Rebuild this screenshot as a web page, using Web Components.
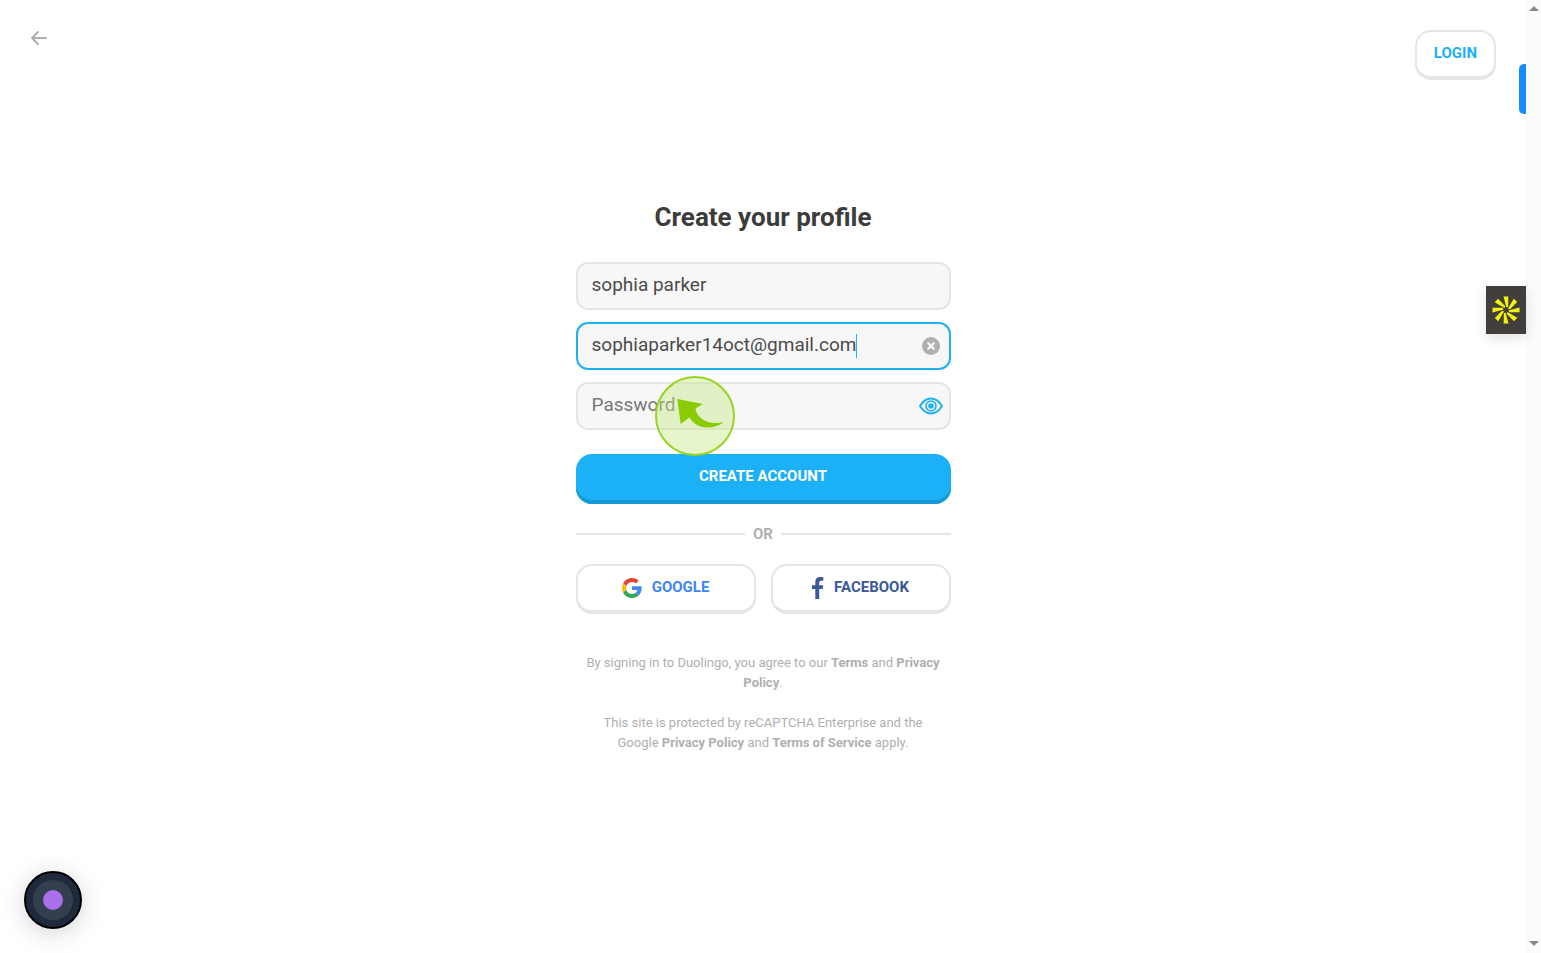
<!DOCTYPE html>
<html lang="en">
<head>
<meta charset="utf-8">
<meta name="viewport" content="width=device-width, initial-scale=1">
<title>Create your profile</title>
<style>
  :root {
    --clr-accent: #1cb0f6;
    --clr-accent-dark: #1899d6;
    --clr-text: #3c3c3c;
    --clr-muted: #afafaf;
    --clr-line: #e5e5e5;
    --clr-field: #f7f7f7;
  }

  body {
    margin: 0;
    background: #fff;
    color: var(--clr-text);
    font-family: Roboto, "Liberation Sans", sans-serif;
  }
</style>
</head>
<body>

<sp-page>
  <sp-header slot="header"></sp-header>
  <sp-signup slot="main"></sp-signup>
  <sp-recorder slot="overlay"></sp-recorder>
  <sp-side-tabs slot="overlay"></sp-side-tabs>
  <sp-scrollbar slot="scrollbar"></sp-scrollbar>
</sp-page>

<script>
function define(name, html, setup) {
  const template = document.createElement('template');
  template.innerHTML = html;

  customElements.define(name, class extends HTMLElement {
    constructor() {
      super();
      this.attachShadow({ mode: 'open' });
      this.shadowRoot.appendChild(template.content.cloneNode(true));
    }

    connectedCallback() {
      if (setup) setup(this, this.shadowRoot);
    }
  });
}

define('sp-page', /*html*/`
  <style>
  :host {
    display: grid;
    grid-template-columns: 1fr 15px;
    min-height: 100vh;
  }

  .view {
    position: relative;
    display: grid;
  }

  header, main {
    grid-area: 1 / 1;
  }

  header {
    align-self: start;
  }

  main {
    place-self: center;
  }
  </style>

  <div class="view">
    <header><slot name="header"></slot></header>
    <main><slot name="main"></slot></main>
    <slot name="overlay"></slot>
  </div>
  <slot name="scrollbar"></slot>
`);

define('sp-header', /*html*/`
  <style>
  :host {
    display: flex;
    justify-content: space-between;
    align-items: flex-start;
    padding: 30px;
  }

  .back {
    display: flex;
    padding: 0;
    border: 0;
    background: none;
    cursor: pointer;
  }
  </style>

  <button class="back" type="button" aria-label="Back">
    <svg width="18" height="16" viewBox="0 0 18 16" fill="none" stroke="#afafaf" stroke-width="2" stroke-linecap="round" stroke-linejoin="round">
      <path d="M16 8H2M8 2L2 8l6 6"/>
    </svg>
  </button>
  <sp-button>LOGIN</sp-button>
`);

define('sp-button', /*html*/`
  <style>
  :host {
    display: block;
    --clr-label: var(--clr-accent);
  }

  :host([kind="google"]) {
    --clr-label: #4285f4;
  }

  :host([kind="facebook"]) {
    --clr-label: #3b5998;
  }

  button {
    display: flex;
    justify-content: center;
    align-items: center;
    gap: 10px;
    width: 100%;
    height: 50px;
    padding: 0 17px 2px;
    border: 2px solid var(--clr-line);
    border-bottom-width: 4px;
    border-radius: 16px;
    background: #fff;
    color: var(--clr-label);
    font: 700 15px/20px Roboto, "Liberation Sans", sans-serif;
    cursor: pointer;
  }

  :host([kind="primary"]) button {
    border: 0;
    padding: 0 16px 6px;
    background: var(--clr-accent);
    box-shadow: inset 0 -4px var(--clr-accent-dark);
    color: #fff;
  }

  ::slotted(svg) {
    flex: none;
    margin-top: 2px;
  }
  </style>

  <button type="button"><slot name="icon"></slot><slot></slot></button>
`);

define('sp-field', /*html*/`
  <style>
  :host {
    position: relative;
    display: block;
  }

  label {
    display: flex;
    align-items: center;
    box-sizing: border-box;
    height: 48px;
    padding: 0 6px 0 14px;
    border: 2px solid var(--clr-line);
    border-radius: 12px;
    background: var(--clr-field);
    cursor: text;
  }

  :host([active]) label {
    border-color: var(--clr-accent);
  }

  input {
    flex: 1;
    min-width: 0;
    height: 26px;
    margin-bottom: 2px;
    padding: 0;
    border: 0;
    outline: 0;
    background: none;
    color: #4b4b4b;
    font: 400 19px/26px Roboto, "Liberation Sans", sans-serif;
  }

  input::placeholder {
    color: #777;
  }

  :host([active]) input {
    flex: none;
    field-sizing: content;
  }

  .caret {
    display: none;
    width: 1px;
    height: 24px;
    background: var(--clr-accent);
  }

  :host([active]) .caret {
    display: block;
  }

  ::slotted(button) {
    display: flex;
    justify-content: center;
    width: 24px;
    margin-left: auto;
    padding: 0;
    border: 0;
    background: none;
    cursor: pointer;
  }
  </style>

  <label><input><span class="caret"></span><slot></slot></label>
  <slot name="pointer"></slot>
`, (host, root) => {
  const input = root.querySelector('input');
  input.type = host.getAttribute('type') || 'text';
  input.value = host.getAttribute('value') || '';
  input.placeholder = host.getAttribute('placeholder') || '';
  input.setAttribute('aria-label', host.getAttribute('label'));
});

define('sp-pointer', /*html*/`
  <style>
  :host {
    position: absolute;
    left: 79px;
    top: -6px;
    z-index: 1;
    pointer-events: none;
  }

  svg {
    display: block;
  }
  </style>

  <svg width="80" height="80" viewBox="0 0 80 80">
    <circle cx="40" cy="40" r="39" fill="#c4e880" fill-opacity=".42" stroke="#99d323" stroke-width="2"/>
    <path d="M22.3 23L47.8 28L40.5 32.5C41 40 51 50 68.5 46.3C60 53.5 42 54.5 34.5 41.5L25.7 48Z" fill="#8acb05"/>
  </svg>
`);

define('sp-divider', /*html*/`
  <style>
  :host {
    display: flex;
    align-items: center;
    gap: 8px;
    color: var(--clr-muted);
    font-size: 15px;
    font-weight: 700;
    line-height: 20px;
  }

  :host::before, :host::after {
    content: "";
    flex: 1;
    height: 2px;
    background: var(--clr-line);
  }
  </style>

  <slot></slot>
`);

define('sp-legal', /*html*/`
  <style>
  :host {
    display: block;
    color: var(--clr-muted);
    font-size: 13px;
    line-height: 20px;
    text-align: center;
  }

  p {
    margin: 0;
  }

  p + p {
    margin-top: 20px;
  }

  a {
    color: inherit;
    font-weight: 700;
    text-decoration: none;
  }
  </style>

  <p>By signing in to Duolingo, you agree to our <a href="#terms">Terms</a> and <a href="#privacy">Privacy<br>Policy</a>.</p>
  <p>This site is protected by reCAPTCHA Enterprise and the<br>Google <a href="#google-privacy">Privacy Policy</a> and <a href="#google-terms">Terms of Service</a> apply.</p>
`);

define('sp-signup', /*html*/`
  <style>
  :host {
    position: relative;
    display: block;
    width: 375px;
    max-width: 100vw;
  }

  h1 {
    margin: 0 0 28px;
    font-size: 26px;
    line-height: 34px;
    text-align: center;
  }

  form {
    display: grid;
    gap: 12px;
  }

  form > sp-button {
    margin-top: 12px;
  }

  sp-divider {
    margin: 20px 0;
  }

  .social {
    display: grid;
    grid-template-columns: 1fr 1fr;
    gap: 15px;
    margin-bottom: 39px;
  }
  </style>

  <h1>Create your profile</h1>
  <form>
    <sp-field label="Name" value="sophia parker"></sp-field>
    <sp-field label="Email" value="sophiaparker14oct@gmail.com" active>
      <button type="button" aria-label="Clear email">
        <svg width="18" height="18" viewBox="0 0 18 18">
          <circle cx="9" cy="9" r="9" fill="#afafaf"/>
          <path d="M6.2 6.2l5.6 5.6M11.8 6.2l-5.6 5.6" stroke="#fff" stroke-width="2.2" stroke-linecap="round"/>
        </svg>
      </button>
    </sp-field>
    <sp-field label="Password" type="password" placeholder="Password">
      <button type="button" aria-label="Show password">
        <svg width="24" height="18" viewBox="0 0 24 18" fill="none" stroke="#1cb0f6">
          <path d="M1 9C4 4 8 1.5 12 1.5S20 4 23 9C20 14 16 16.5 12 16.5S4 14 1 9Z" stroke-width="2" stroke-linejoin="round"/>
          <circle cx="12" cy="9" r="5" stroke-width="1.6"/>
          <circle cx="12" cy="9" r="2.8" fill="#1cb0f6" stroke="none"/>
        </svg>
      </button>
      <sp-pointer slot="pointer"></sp-pointer>
    </sp-field>
    <sp-button kind="primary">CREATE ACCOUNT</sp-button>
  </form>
  <sp-divider>OR</sp-divider>
  <div class="social">
    <sp-button kind="google">
      <svg slot="icon" width="20" height="20" viewBox="0 0 48 48">
        <path fill="#ea4335" d="M24 9.5c3.54 0 6.71 1.22 9.21 3.6l6.85-6.85C35.9 2.38 30.47 0 24 0 14.62 0 6.51 5.38 2.56 13.22l7.98 6.19C12.43 13.72 17.74 9.5 24 9.5z"/>
        <path fill="#4285f4" d="M46.98 24.55c0-1.57-.15-3.09-.38-4.55H24v9.02h12.94c-.58 2.96-2.26 5.48-4.78 7.18l7.73 6c4.51-4.18 7.09-10.36 7.09-17.65z"/>
        <path fill="#fbbc05" d="M10.53 28.59A14.5 14.5 0 0 1 9.77 24c0-1.6.27-3.14.76-4.59l-7.98-6.19A24 24 0 0 0 0 24c0 3.88.92 7.54 2.56 10.78l7.97-6.19z"/>
        <path fill="#34a853" d="M24 48c6.48 0 11.93-2.13 15.89-5.81l-7.73-6c-2.15 1.45-4.92 2.3-8.16 2.3-6.26 0-11.57-4.22-13.47-9.91l-7.98 6.19C6.51 42.62 14.62 48 24 48z"/>
      </svg>GOOGLE
    </sp-button>
    <sp-button kind="facebook">
      <svg slot="icon" width="12" height="22" viewBox="0 0 12 22">
        <path fill="#3b5998" d="M3.3 22V12H0V8.2h3.3V5C3.3 1.8 5.2 0 8.2 0c1.4 0 2.7.1 3.1.2v3.5H9.2c-1.6 0-2 .8-2 2v2.5h4L10.6 12H7.2v10z"/>
      </svg>FACEBOOK
    </sp-button>
  </div>
  <sp-legal></sp-legal>
`);

define('sp-recorder', /*html*/`
  <style>
  :host {
    position: absolute;
    left: 24px;
    bottom: 24px;
  }

  button {
    display: block;
    padding: 0;
    border: 0;
    border-radius: 50%;
    background: none;
    box-shadow: 0 4px 24px rgba(30, 41, 59, .2);
    cursor: pointer;
  }

  svg {
    display: block;
  }
  </style>

  <button type="button" aria-label="Stop recording">
    <svg width="58" height="58" viewBox="0 0 58 58">
      <circle cx="29" cy="29" r="28" fill="#1f2a3c" stroke="#000" stroke-width="2"/>
      <circle cx="29" cy="29" r="20" fill="#333f4e"/>
      <circle cx="29" cy="29" r="10" fill="#a970ea"/>
    </svg>
  </button>
`);

define('sp-side-tabs', /*html*/`
  <style>
  :host {
    position: absolute;
    right: 0;
    top: 64px;
    display: flex;
    flex-direction: column;
    align-items: flex-end;
    gap: 172px;
  }

  button {
    display: flex;
    justify-content: center;
    align-items: center;
    padding: 0;
    border: 0;
    cursor: pointer;
  }

  .handle {
    width: 7px;
    height: 50px;
    border-radius: 5px 0 0 5px;
    background: #148cff;
  }

  .burst {
    width: 40px;
    height: 48px;
    background: #423e3b;
    box-shadow: 0 4px 12px rgba(0, 0, 0, .12);
  }
  </style>

  <button class="handle" type="button" aria-label="Open panel"></button>
  <button class="burst" type="button" aria-label="Open assistant">
    <svg width="28" height="28" viewBox="-14 -14 28 28" fill="#f5f50a"></svg>
  </button>
`, (host, root) => {
  // eight identical rays around the centre
  root.querySelector('svg').innerHTML = [0, 45, 90, 135, 180, 225, 270, 315]
    .map(a => `<path d="M-2.5 -13.5H2.3L2.2 -3.4L.4 -2.4Z" transform="rotate(${a})"/>`)
    .join('');
});

define('sp-scrollbar', /*html*/`
  <style>
  :host {
    display: flex;
    flex-direction: column;
    justify-content: space-between;
    align-items: center;
    box-sizing: border-box;
    padding: 6px 0 7px;
    background: #fbfbfb;
  }
  </style>

  <svg width="10" height="5" viewBox="0 0 10 5"><path d="M0 5L5 0L10 5Z" fill="#8a8a8a"/></svg>
  <svg width="10" height="5" viewBox="0 0 10 5"><path d="M0 0L5 5L10 0Z" fill="#8a8a8a"/></svg>
`);
</script>
</body>
</html>
